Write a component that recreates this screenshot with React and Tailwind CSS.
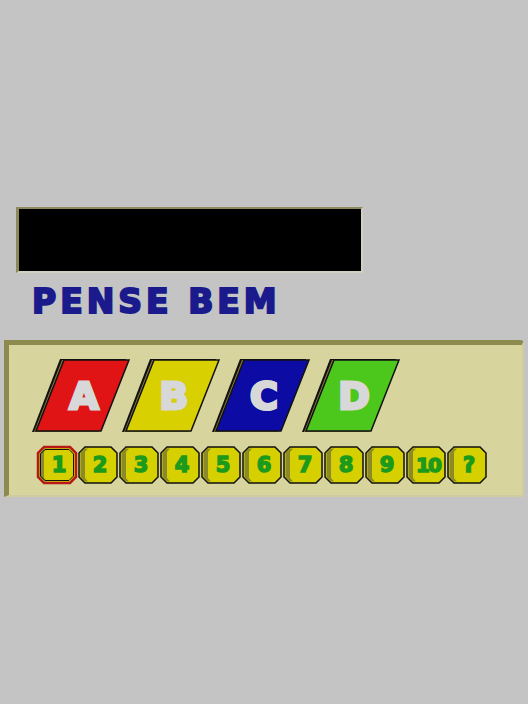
import React from "react";

const letters = [
  { l: "A", fill: "#e01414" },
  { l: "B", fill: "#d8d000" },
  { l: "C", fill: "#0c0ca4" },
  { l: "D", fill: "#4cc81c" },
];

const numbers = ["1", "2", "3", "4", "5", "6", "7", "8", "9", "10", "?"];

const Tile = ({ l, fill }) => (
  <div className="relative w-[90px] h-[73px] flex items-center justify-center">
    <svg className="absolute inset-0 overflow-visible" width="90" height="73">
      <polygon points="25,0 91,0 63,73 -3,73" fill="#111" />
      <polygon points="27,1 92,1 64,73 -1,73" fill="#8a7a3c" />
      <polygon points="29,1 94,1 66,72 1,72" fill={fill} stroke="#111" strokeWidth="1.5" />
    </svg>
    <span
      className="relative pl-2 text-[38px] font-bold leading-none text-[#d8d8d8]"
      style={{
        fontFamily: '"DejaVu Sans", sans-serif',
        WebkitTextStroke: "3px #d8d8d8",
        textShadow: "1px 1px 0 #9a9a9a, -1px -1px 0 #9a9a9a, 1px -1px 0 #9a9a9a, -1px 1px 0 #9a9a9a",
      }}
    >
      {l}
    </span>
  </div>
);

const NumButton = ({ n, active }) => (
  <div className="relative w-[38px] h-[36px] flex items-center justify-center">
    <svg className="absolute inset-0 overflow-visible" width="38" height="36">
      <polygon
        points="6,0 32,0 38,6 38,30 32,36 6,36 0,30 0,6"
        fill="#d6d000"
        stroke={active ? "#b81818" : "#111"}
        strokeWidth={active ? "2.5" : "1.5"}
      />
      <polygon points="6,1.5 9,1.5 6,5 6,31 9,34.5 6,34.5 1.5,30 1.5,6" fill="#8c8a28" />
      {active && (
        <polygon
          points="7,2.5 31,2.5 35.5,7 35.5,29 31,33.5 7,33.5 2.5,29 2.5,7"
          fill="none"
          stroke="#111"
          strokeWidth="1"
        />
      )}
    </svg>
    <span
      className={
        "relative pl-1 font-bold leading-none text-[#1c9a1c] " +
        (n === "10" ? "text-[20px] tracking-[-2px]" : "text-[21px]")
      }
      style={{
        fontFamily: '"DejaVu Sans", sans-serif',
        WebkitTextStroke: "1.5px #1c9a1c",
      }}
    >
      {n}
    </span>
  </div>
);

export default function App() {
  return (
    <div className="w-[528px] h-[704px] bg-[#c4c4c4] pt-[207px] overflow-hidden">
      <div className="ml-4 w-[347px] h-[66px] bg-black border-l-[3px] border-t-2 border-[#8c8a5a] border-r-2 border-b-2 border-r-[#d0cfc0] border-b-[#d0cfc0]"></div>

      <div
        className="ml-[32px] mt-[13px] h-[30px] flex items-center text-[33px] font-bold leading-none tracking-[4px] text-[#1a1a8c]"
        style={{
          fontFamily: '"DejaVu Sans", sans-serif',
          WebkitTextStroke: "2px #1a1a8c",
        }}
      >
        PENSE BEM
      </div>

      <div className="ml-1 mt-[24px] w-[520px] h-[157px] bg-[#d7d49e] border-t-[5px] border-l-[5px] border-[#8c8a4c] border-r-2 border-b-2 border-r-[#cfcca0] border-b-[#cfcca0] rounded-tr-[4px] pt-[14px]">
        <div className="flex pl-[26px]">
          {letters.map((t) => (
            <Tile key={t.l} {...t} />
          ))}
        </div>
        <div className="flex gap-[3px] pl-[29px] mt-[15px]">
          {numbers.map((n, i) => (
            <NumButton key={n} n={n} active={i === 0} />
          ))}
        </div>
      </div>
    </div>
  );
}
